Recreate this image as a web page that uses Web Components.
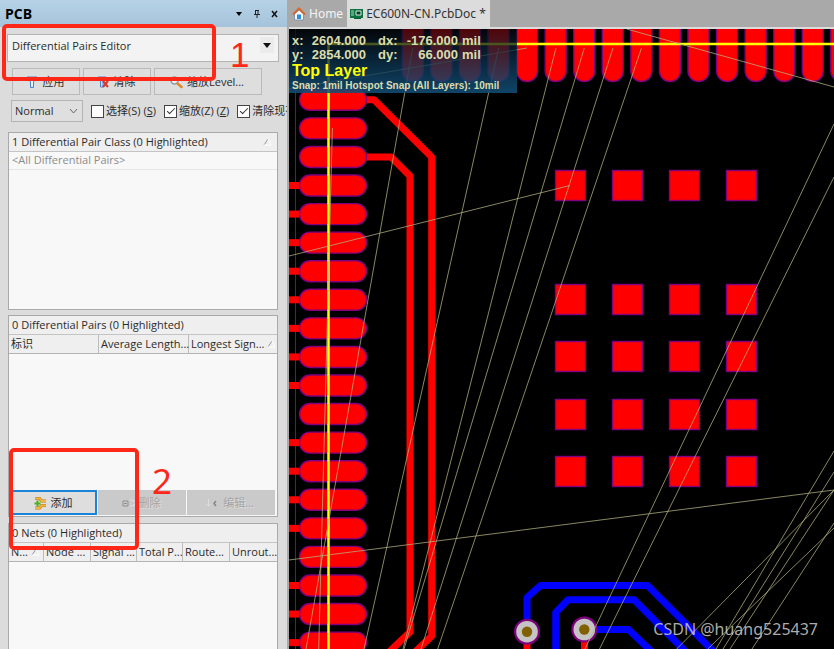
<!DOCTYPE html>
<html lang="zh-CN">
<head>
<meta charset="utf-8">
<title>EC600N-CN.PcbDoc</title>
<style>
    body {
        margin: 0;
        height: 100vh;
        overflow: hidden;
        position: relative;
        display: grid;
        grid-template-columns: 289px 1fr;
        background: #dcdcdc;
        color: #2b2b2b;
        font-family: "Noto Sans", "Noto Sans CJK SC", sans-serif;
        font-size: 11px;
        line-height: 16px;
    }

    pcb-panel {
        font-family: "Open Sans", "Noto Sans CJK SC", sans-serif;
    }

    main {
        display: flex;
        flex-direction: column;
        min-width: 0;
        min-height: 0;
    }

    .actions {
        display: flex;
        gap: 3px;
        margin: 6px 0 0 4px;
    }

    .actions tool-button:nth-child(-n+2) {
        width: 68px;
    }

    .actions tool-button:last-child {
        width: 108px;
    }

    .options {
        display: flex;
        align-items: center;
        gap: 8px;
        margin: 5px -8px 10px 3px;
        white-space: nowrap;
    }

    .options drop-down {
        width: 72px;
        flex: none;
    }

    .footer {
        display: grid;
        grid-template-columns: 86px 1fr 1fr;
        gap: 1px;
        padding: 0 2px 1px;
    }

    .footer tool-button {
        height: 25px;
    }
</style>
</head>
<body>

<pcb-panel name="PCB">
    <drop-down label="Panel mode" value="Differential Pairs Editor" solid></drop-down>
    <div class="actions">
        <tool-button icon="funnel">应用</tool-button>
        <tool-button icon="clear">清除</tool-button>
        <tool-button icon="lens">缩放Level...</tool-button>
    </div>
    <div class="options">
        <drop-down label="Highlight mode" value="Normal"></drop-down>
        <check-option>选择(S) (<u>S</u>)</check-option>
        <check-option checked>缩放(Z) (<u>Z</u>)</check-option>
        <check-option checked>清除现有</check-option>
    </div>
    <list-box style="height: 178px" caption="1 Differential Pair Class (0 Highlighted)" rows="&lt;All Differential Pairs&gt;" sorted></list-box>
    <list-box style="height: 202px" caption="0 Differential Pairs (0 Highlighted)" columns="标识|Average Length...|Longest Sign..." widths="89|90|89" sort="2">
        <div class="footer">
            <tool-button icon="add" focused>添加</tool-button>
            <tool-button icon="remove" disabled>删除</tool-button>
            <tool-button icon="edit" disabled>编辑...</tool-button>
        </div>
    </list-box>
    <list-box class="last" style="flex: 1" caption="0 Nets (0 Highlighted)" columns="N...|Node ...|Signal ...|Total P...|Route...|Unrout..." widths="34|47|46|46|47|48" sort="0"></list-box>
</pcb-panel>

<main>
    <doc-tabs>
        <doc-tab icon="home">Home</doc-tab>
        <doc-tab icon="board" active>EC600N-CN.PcbDoc *</doc-tab>
    </doc-tabs>
    <pcb-board>
        <heads-up></heads-up>
    </pcb-board>
</main>

<call-out style="left: 2px; top: 24px; width: 206px; height: 49px"></call-out>
<call-out-number style="left: 230px; top: 40px; font-family: 'Liberation Sans', sans-serif">1</call-out-number>
<call-out style="left: 9px; top: 448px; width: 122px; height: 94px"></call-out>
<call-out-number style="left: 152px; top: 466px">2</call-out-number>
<water-mark>CSDN @huang525437</water-mark>

<script>
const icons = {
    funnel: `<svg width="14" height="14" viewBox="0 0 14 14"><path d="M2 2h10L8.500 7v5.500h-3V7z" fill="#dbe9fa" stroke="#4a83cc"/><path d="M7 6v5" stroke="#fff"/></svg>`,
    clear: `<svg width="14" height="14" viewBox="0 0 14 14"><path d="M2 2h8L7 6v6H4.500V6z" fill="#cfe0f5" stroke="#4a83cc"/><path d="M7 6l5 6m0-6l-5 6" stroke="#d8372b" stroke-width="2"/></svg>`,
    lens: `<svg width="14" height="14" viewBox="0 0 14 14"><circle cx="5.500" cy="5.500" r="3.500" fill="#e8f0f8" stroke="#8d9aa8" stroke-width="1.500"/><path d="M8.500 8.500l4 3.500" stroke="#dc8a2c" stroke-width="2.500" stroke-linecap="round"/></svg>`,
    add: `<svg width="14" height="14" viewBox="0 0 14 14"><path d="M2 2.500h4.500l2 2.500H13M2 12h4.500l2-2.500H13" fill="none" stroke="#b87f1c" stroke-width="3"/><path d="M2 2.500h4.500l2 2.500H13M2 12h4.500l2-2.500H13" fill="none" stroke="#f4b43a" stroke-width="1.800"/><path d="M4.500 4.500v6M1.500 7.500h6" stroke="#4fae1b" stroke-width="2"/></svg>`,
    remove: `<svg width="14" height="14" viewBox="0 0 14 14"><path d="M2 5h5v5H2z" fill="none" stroke="#8f8f8f"/><path d="M3.500 7.500h2" stroke="#777"/><path d="M9 4h2l1 1h2M9 10h2l1-1h2" fill="none" stroke="#e2e2e2"/></svg>`,
    edit: `<svg width="14" height="14" viewBox="0 0 14 14"><path d="M3.500 3v7M1 8l2.500 2L6 8" fill="none" stroke="#dedede"/><path d="M11 5L9 7.500l2 2.500" fill="none" stroke="#858585" stroke-width="1.500"/></svg>`,
    home: `<svg width="14" height="14" viewBox="0 0 14 14"><path d="M2.500 7v6h9V7L7 3z" fill="#f8f8f8" stroke="#8197ad"/><path d="M5 7.500h4V12H5z" fill="#2f8de0"/><path d="M1 7.500L7 1.500l6 6" fill="none" stroke="#d9682e" stroke-width="2"/></svg>`,
    board: `<svg width="13" height="12" viewBox="0 0 13 12"><path d="M0 1h13v9H0z" fill="#0d7040"/><path d="M1 3h3M1 5h3M1 7h3" stroke="#a5dcba"/><path d="M6 3h5v4H6z" fill="#063d24" stroke="#d6eee0"/><path d="M4 10.500h7" stroke="#0a5c34"/></svg>`
}

// every component keeps its markup and its styles in an open shadow root
class BaseElement extends HTMLElement {
    connectedCallback() {
        if (this.shadowRoot) return
        this.attachShadow({mode: 'open'})
        const template = document.createElement('template')
        template.innerHTML = this.render()
        this.shadowRoot.appendChild(template.content.cloneNode(true))
    }

    attr(name) {
        return (this.getAttribute(name) || '').replace(/</g, '&lt;')
    }
}

class PcbPanel extends BaseElement {
    render() {
        return `
            <style>
                :host {
                    display: flex;
                    flex-direction: column;
                    min-height: 0;
                    box-sizing: border-box;
                    overflow: hidden;
                    background: #dcdcdc;
                    border-right: 2px solid #a9a9a9;
                }
                header {
                    display: flex;
                    align-items: center;
                    height: 27px;
                    flex: none;
                    padding: 0 3px 0 5px;
                    background: linear-gradient(#b7d2e7, #a4c3da);
                }
                h1 {
                    flex: 1;
                    margin: 0;
                    font-size: 14px;
                    color: #000;
                }
                header button {
                    display: flex;
                    justify-content: center;
                    width: 18px;
                    padding: 0;
                    border: 0;
                    background: none;
                }
                .body {
                    display: flex;
                    flex: 1;
                    flex-direction: column;
                    min-height: 0;
                    padding: 7px 9px 0 8px;
                }
            </style>
            <header>
                <h1>${this.attr('name')}</h1>
                <button aria-label="Menu"><svg width="8" height="8"><path d="M1 2h6L4 6z"/></svg></button>
                <button aria-label="Pin"><svg width="8" height="8"><path d="M2.500 0v4M5 0v4M2 .5h4M1 4.500h6M4 5v3" stroke="#222"/></svg></button>
                <button aria-label="Close"><svg width="8" height="8"><path d="M1 1l5 6M6 1L1 7" stroke="#111" stroke-width="1.500"/></svg></button>
            </header>
            <div class="body"><slot></slot></div>
        `
    }
}

class DropDown extends BaseElement {
    render() {
        return `
            <style>
                :host {
                    display: grid;
                    align-items: center;
                    height: 22px;
                }
                :host([solid]) {
                    height: 28px;
                    margin: 0 -1px;
                    flex: none;
                }
                select, svg {
                    grid-area: 1 / 1;
                }
                select {
                    appearance: none;
                    box-sizing: border-box;
                    width: 100%;
                    height: 100%;
                    margin: 0;
                    padding: 0 4px 0 3px;
                    border: 1px solid #b4b4b4;
                    border-radius: 0;
                    background: #dfdfdf;
                    color: inherit;
                    font: inherit;
                }
                :host([solid]) select {
                    padding: 0 4px 4px;
                    background: #f3f3f3;
                }
                svg {
                    justify-self: end;
                    margin-right: 5px;
                    pointer-events: none;
                }
                :host([solid]) svg {
                    margin: 0 5px 6px 0;
                    background: #ebebeb;
                }
            </style>
            <select aria-label="${this.attr('label')}"><option>${this.attr('value')}</option></select>
            ${this.hasAttribute('solid')
                ? '<svg width="14" height="16"><path d="M3 6h8l-4 5z" fill="#111"/></svg>'
                : '<svg width="9" height="6"><path d="M1 1l3.500 4L8 1" fill="none" stroke="#666"/></svg>'}
        `
    }
}

class ToolButton extends BaseElement {
    render() {
        return `
            <style>
                :host {
                    display: block;
                    height: 27px;
                }
                button {
                    display: flex;
                    align-items: center;
                    justify-content: center;
                    gap: 4px;
                    box-sizing: border-box;
                    width: 100%;
                    height: 100%;
                    padding: 0 3px 0 0;
                    border: 1px solid #bababa;
                    background: #dedede;
                    color: inherit;
                    font: inherit;
                    white-space: nowrap;
                }
                :host([focused]) button {
                    border: 2px solid #1883d7;
                }
                :host([disabled]) button {
                    border-color: #c9c9c9;
                    background: #cacaca;
                    color: #a3a3a3;
                    text-shadow: 1px 1px #e0e0e0;
                }
            </style>
            <button ${this.hasAttribute('disabled') ? 'disabled' : ''}>${icons[this.getAttribute('icon')]}<span><slot></slot></span></button>
        `
    }
}

class CheckOption extends BaseElement {
    render() {
        return `
            <style>
                :host {
                    display: block;
                }
                label {
                    display: flex;
                    align-items: center;
                    gap: 2px;
                }
                input {
                    appearance: none;
                    display: grid;
                    box-sizing: border-box;
                    width: 13px;
                    height: 13px;
                    margin: 0;
                    border: 1px solid #444;
                    background: #fff;
                }
                input:checked::before {
                    content: "";
                    width: 7px;
                    height: 3px;
                    margin: 2px 0 0 2px;
                    border: solid #333;
                    border-width: 0 0 1px 1px;
                    transform: rotate(-45deg);
                }
            </style>
            <label><input type="checkbox" ${this.hasAttribute('checked') ? 'checked' : ''}><span><slot></slot></span></label>
        `
    }
}

class ListBox extends BaseElement {
    render() {
        const arrow = '<svg width="9" height="8"><path d="M1 7l4-6" stroke="#999"/><path d="M5 1l3 6H1" fill="none" stroke="#fff"/></svg>'
        const columns = this.hasAttribute('columns') ? this.attr('columns').split('|') : []
        const widths = this.attr('widths').split('|')
        const sort = this.hasAttribute('sort') ? Number(this.attr('sort')) : -1

        return `
            <style>
                :host {
                    display: flex;
                    flex: none;
                    flex-direction: column;
                    box-sizing: border-box;
                    min-height: 0;
                    margin-bottom: 5px;
                    border: 1px solid #a9a9a9;
                    background: #f8f8f8;
                }
                :host(.last) {
                    margin: 1px 0 0;
                    border-bottom: 0;
                }
                .caption {
                    display: flex;
                    align-items: center;
                    justify-content: space-between;
                    box-sizing: border-box;
                    height: 19px;
                    padding: 0 5px 0 3px;
                    border-bottom: 1px solid #c4c4c4;
                    background: #efefef;
                }
                .row {
                    height: 17px;
                    padding-left: 3px;
                    border-bottom: 1px solid #e6e6e6;
                    color: #8c8c8c;
                }
                table {
                    width: 100%;
                    table-layout: fixed;
                    border-spacing: 0;
                }
                th {
                    box-sizing: border-box;
                    height: 19px;
                    padding: 0 0 0 2px;
                    border-bottom: 1px solid #b4b4b4;
                    background: #efefef;
                    font-weight: normal;
                    text-align: left;
                    white-space: nowrap;
                }
                th + th {
                    border-left: 1px solid #bcbcbc;
                }
                th svg {
                    margin-left: 3px;
                }
                .space {
                    flex: 1;
                }
            </style>
            <div class="caption">${this.attr('caption')}${this.hasAttribute('sorted') ? arrow : ''}</div>
            ${columns.length ? `<table><thead><tr>${columns.map((c, i) => `<th style="width: ${widths[i]}px">${c}${i === sort ? arrow : ''}</th>`).join('')}</tr></thead></table>` : ''}
            ${this.hasAttribute('rows') ? `<div class="row">${this.attr('rows')}</div>` : ''}
            <div class="space"></div>
            <slot></slot>
        `
    }
}

class DocTabs extends BaseElement {
    render() {
        return `
            <style>
                :host {
                    display: flex;
                    height: 27px;
                    flex: none;
                    border-bottom: 2px solid #dcdcdc;
                    background: #a9a9a9;
                }
            </style>
            <slot></slot>
        `
    }
}

class DocTab extends BaseElement {
    render() {
        return `
            <style>
                :host {
                    display: block;
                    font-size: 12px;
                }
                a {
                    display: flex;
                    align-items: center;
                    gap: 3px;
                    height: 28px;
                    padding: 0 4px 0 3px;
                    color: #f4f4f4;
                    text-decoration: none;
                    white-space: nowrap;
                }
                :host([active]) a {
                    background: #dcdcdc;
                    color: #333;
                }
            </style>
            <a href="#">${icons[this.getAttribute('icon')]}<slot></slot></a>
        `
    }
}

class HeadsUp extends BaseElement {
    render() {
        return `
            <style>
                :host {
                    display: block;
                    box-sizing: border-box;
                    width: 228px;
                    height: 64px;
                    padding: 5px 3px 0;
                    background: linear-gradient(rgba(4, 8, 12, .7), rgba(18, 78, 118, .88));
                    color: #dcdcae;
                    font-family: "Liberation Sans", sans-serif;
                    font-weight: bold;
                }
                dl {
                    display: grid;
                    grid-template-columns: 16px 58px 34px 58px 1fr;
                    margin: 0;
                    font-size: 13px;
                    line-height: 14px;
                }
                dt, dd {
                    margin: 0;
                    white-space: nowrap;
                }
                dd {
                    text-align: right;
                }
                dt.second {
                    padding-left: 12px;
                }
                span {
                    padding-left: 4px;
                }
                .layer {
                    color: #ff0;
                    font-size: 16px;
                    line-height: 18px;
                }
                .snap {
                    font-size: 10px;
                    line-height: 12px;
                    white-space: nowrap;
                }
            </style>
            <dl>
                <dt>x:</dt><dd>2604.000</dd><dt class="second">dx:</dt><dd>-176.000</dd><span>mil</span>
                <dt>y:</dt><dd>2854.000</dd><dt class="second">dy:</dt><dd>66.000</dd><span>mil</span>
            </dl>
            <div class="layer">Top Layer</div>
            <div class="snap">Snap: 1mil Hotspot Snap (All Layers): 10mil</div>
        `
    }
}

class PcbBoard extends BaseElement {
    drawPads() {
        let out = ''
        for (let i = 0; i < 20; i++) {
            const y = 99.8 + i * 28.57
            // pads without a trace to the board edge
            if (![0, 1, 2, 11, 16].includes(i)) {
                out += `<rect x="286" y="${y - 3.5}" width="18" height="7" fill="red"/>`
            }
            out += `<rect class="pad" x="299.500" y="${y - 10.5}" width="67" height="21" rx="10.500"/>`
        }
        for (let i = 0; i < 16; i++) {
            out += `<rect class="pad" x="${402.3 + i * 28.57}" y="10" width="21" height="71.500" rx="10.500"/>`
        }
        for (const y of [170, 284, 341, 399, 456]) {
            for (const x of [555, 612, 669, 726]) {
                out += `<rect class="pad" x="${x + .5}" y="${y + .5}" width="30" height="30"/>`
            }
        }
        return out
    }

    drawNets() {
        const nets = [
            [412.7, 48, 306, 649], [498.7, 48, 364, 649], [527, 48, 289, 89],
            [556, 48, 403, 649], [584.3, 48, 404, 649], [613, 48, 421, 649],
            [641.5, 48, 437.7, 649], [834, 124, 585, 649], [834, 177, 599.5, 649],
            [626.7, 29, 834, 87], [289, 256, 570, 185.5], [289, 560, 834, 490],
            [332.4, 128, 318.7, 649], [676.7, 649, 834, 490], [707.7, 649, 834, 528],
            [716, 649, 834, 451], [723, 649, 834, 472], [730, 649, 834, 490], [752, 649, 834, 523]
        ]
        return nets.map(n => `<path d="M${n[0]} ${n[1]}L${n[2]} ${n[3]}"/>`).join('')
    }

    drawVia(x, y) {
        return `
            <circle cx="${x}" cy="${y}" r="13" fill="#800080"/>
            <circle cx="${x}" cy="${y}" r="10.800" fill="#c4c4c4"/>
            <circle cx="${x}" cy="${y}" r="5.200" fill="#806000"/>
        `
    }

    render() {
        return `
            <style>
                :host {
                    display: grid;
                    flex: 1;
                    min-height: 0;
                    overflow: hidden;
                    background: #000;
                }
                svg, slot {
                    grid-area: 1 / 1;
                }
                svg {
                    width: 100%;
                    height: 100%;
                    min-height: 0;
                }
                ::slotted(heads-up) {
                    grid-area: 1 / 1;
                    align-self: start;
                    z-index: 1;
                }
                .pad {
                    fill: #f00;
                    stroke: #800080;
                    stroke-width: 1.4;
                }
                .track {
                    fill: none;
                    stroke-width: 7;
                    stroke-linejoin: round;
                }
                .nets {
                    stroke: #b4b482;
                    stroke-opacity: .75;
                }
            </style>
            <svg viewBox="289 29 545 620" preserveAspectRatio="xMinYMin slice">
                <path d="M295.500 29V649" stroke="#800080"/>
                <g class="track" stroke="red">
                    <path d="M360 99.700H374L431.700 157V636L414 653"/>
                    <path d="M360 157H391L410 176V632L388 653"/>
                    <path d="M527 632V652M584.500 630V652"/>
                </g>
                <g class="track" stroke="blue">
                    <path d="M527 632V597.500L540.500 585.500H647.500L714 652"/>
                    <path d="M555.700 652V612.500L568 599.700H634L686 652"/>
                    <path d="M584 629.500H628.500L652 652"/>
                </g>
                ${this.drawPads()}
                ${this.drawVia(527, 631.7)}
                ${this.drawVia(584.3, 629.5)}
                <path d="M328.500 649V44H834" fill="none" stroke="#ff0" stroke-width="2.500"/>
                <g class="nets">${this.drawNets()}</g>
            </svg>
            <slot></slot>
        `
    }
}

class CallOut extends BaseElement {
    render() {
        return `
            <style>
                :host {
                    display: block;
                    position: absolute;
                    z-index: 2;
                    border: 4px solid #ff2718;
                    border-radius: 5px;
                    pointer-events: none;
                }
            </style>
        `
    }
}

class CallOutNumber extends BaseElement {
    render() {
        return `
            <style>
                :host {
                    display: block;
                    position: absolute;
                    z-index: 2;
                    color: #ff2718;
                    font-size: 35px;
                    line-height: 30px;
                }
            </style>
            <slot></slot>
        `
    }
}

class WaterMark extends BaseElement {
    render() {
        return `
            <style>
                :host {
                    display: block;
                    position: absolute;
                    right: 16px;
                    bottom: 9px;
                    z-index: 2;
                    color: rgba(205, 205, 205, .85);
                    font-size: 16px;
                    line-height: 22px;
                }
            </style>
            <slot></slot>
        `
    }
}

window.customElements.define('pcb-panel', PcbPanel)
window.customElements.define('drop-down', DropDown)
window.customElements.define('tool-button', ToolButton)
window.customElements.define('check-option', CheckOption)
window.customElements.define('list-box', ListBox)
window.customElements.define('doc-tabs', DocTabs)
window.customElements.define('doc-tab', DocTab)
window.customElements.define('heads-up', HeadsUp)
window.customElements.define('pcb-board', PcbBoard)
window.customElements.define('call-out', CallOut)
window.customElements.define('call-out-number', CallOutNumber)
window.customElements.define('water-mark', WaterMark)
</script>
</body>
</html>
